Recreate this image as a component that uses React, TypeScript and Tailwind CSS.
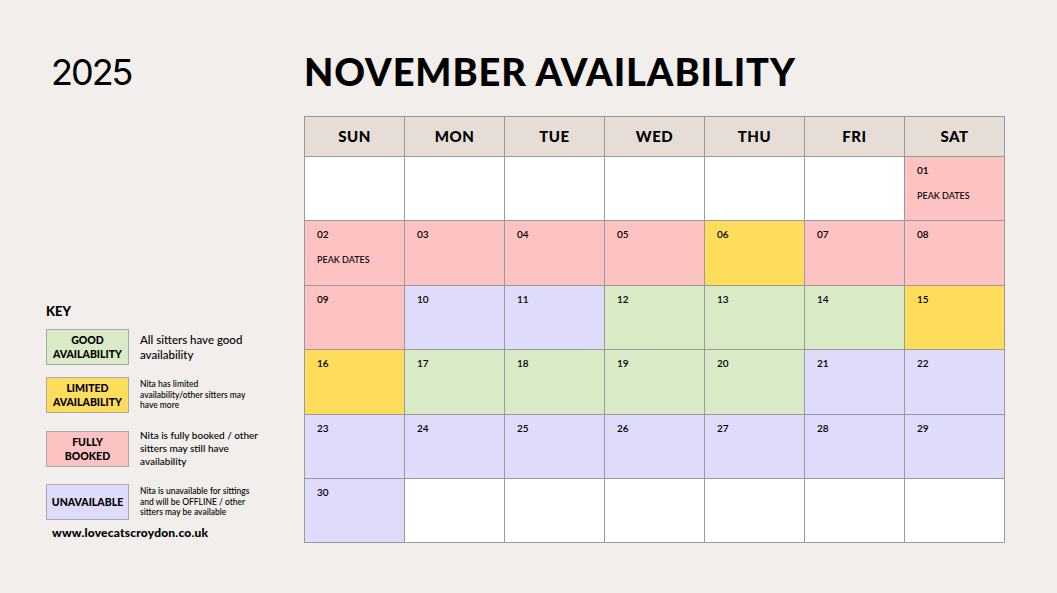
const PINK = 'bg-[#fdc2c2]';
const YELLOW = 'bg-[#fedd5c]';
const GREEN = 'bg-[#d9eac6]';
const LAV = 'bg-[#dedbfb]';
const WHITE = 'bg-white';

type Cell = { day?: string; bg: string; note?: string };

const days = ['SUN', 'MON', 'TUE', 'WED', 'THU', 'FRI', 'SAT'];

const cells: Cell[] = [
  { bg: WHITE },
  { bg: WHITE },
  { bg: WHITE },
  { bg: WHITE },
  { bg: WHITE },
  { bg: WHITE },
  { day: '01', bg: PINK, note: 'PEAK DATES' },
  { day: '02', bg: PINK, note: 'PEAK DATES' },
  { day: '03', bg: PINK },
  { day: '04', bg: PINK },
  { day: '05', bg: PINK },
  { day: '06', bg: YELLOW },
  { day: '07', bg: PINK },
  { day: '08', bg: PINK },
  { day: '09', bg: PINK },
  { day: '10', bg: LAV },
  { day: '11', bg: LAV },
  { day: '12', bg: GREEN },
  { day: '13', bg: GREEN },
  { day: '14', bg: GREEN },
  { day: '15', bg: YELLOW },
  { day: '16', bg: YELLOW },
  { day: '17', bg: GREEN },
  { day: '18', bg: GREEN },
  { day: '19', bg: GREEN },
  { day: '20', bg: GREEN },
  { day: '21', bg: LAV },
  { day: '22', bg: LAV },
  { day: '23', bg: LAV },
  { day: '24', bg: LAV },
  { day: '25', bg: LAV },
  { day: '26', bg: LAV },
  { day: '27', bg: LAV },
  { day: '28', bg: LAV },
  { day: '29', bg: LAV },
  { day: '30', bg: LAV },
  { bg: WHITE },
  { bg: WHITE },
  { bg: WHITE },
  { bg: WHITE },
  { bg: WHITE },
  { bg: WHITE },
];

const keyItems = [
  {
    label: ['GOOD', 'AVAILABILITY'],
    bg: GREEN,
    text: 'All sitters have good availability',
    size: 'w-[128px] text-[11.5px] leading-[15px]',
    gap: '',
  },
  {
    label: ['LIMITED', 'AVAILABILITY'],
    bg: YELLOW,
    text: 'Nita has limited availability/other sitters may have more',
    size: 'w-[118px] text-[8.5px] leading-[10.5px]',
    gap: 'mt-[12px]',
  },
  {
    label: ['FULLY', 'BOOKED'],
    bg: PINK,
    text: 'Nita is fully booked / other sitters may still have availability',
    size: 'w-[128px] text-[10px] leading-[13px]',
    gap: 'mt-[16px]',
  },
  {
    label: ['UNAVAILABLE'],
    bg: LAV,
    text: 'Nita is unavailable for sittings and will be OFFLINE / other sitters may be available',
    size: 'w-[118px] text-[8.5px] leading-[10.5px]',
    gap: 'mt-[16px]',
  },
];

export default function App() {
  return (
    <div className="flex h-[593px] w-[1057px] bg-[#f1eeeb] font-['Lato',sans-serif] text-black">
      <aside className="flex w-[304px] flex-col">
        <h2 className="pl-[51px] pt-[50px] font-['Inter',sans-serif] text-[36px] font-normal leading-[44px] tracking-[-2px]">
          2025
        </h2>

        <div className="mt-[209px] pl-[46px]">
          <h3 className="text-[13px] font-black leading-[16px]">KEY</h3>
          <div className="mt-[10px] flex flex-col">
            {keyItems.map((item, i) => (
              <div key={i} className={`flex items-center gap-[11px] ${item.gap}`}>
                <div
                  className={`flex h-[36px] w-[83px] shrink-0 flex-col items-center justify-center border border-[#a9a9a9] ${item.bg} text-[10.5px] font-black leading-[14px]`}
                >
                  {item.label.map((l) => (
                    <span key={l}>{l}</span>
                  ))}
                </div>
                <p className={`${item.size} font-medium`}>{item.text}</p>
              </div>
            ))}
          </div>
          <p className="mt-[5px] pl-[6px] text-[12px] font-black leading-[16px] tracking-[0.2px]">
            www.lovecatscroydon.co.uk
          </p>
        </div>
      </aside>

      <main className="flex flex-col">
        <h1 className="pt-[49px] font-['Lato',sans-serif] text-[38px] font-black leading-[44px] tracking-[0.9px]">
          NOVEMBER AVAILABILITY
        </h1>

        <div className="mt-[23px] w-[701px] border-l border-t border-[#9a9a9a]">
          <div className="grid grid-cols-7">
            {days.map((d) => (
              <div
                key={d}
                className="flex h-[40px] items-center justify-center border-b border-r border-[#9a9a9a] bg-[#e5ddd6] text-[15px] font-black tracking-[0.5px]"
              >
                {d}
              </div>
            ))}
          </div>
          <div className="grid grid-cols-7">
            {cells.map((c, i) => (
              <div
                key={i}
                className={`flex h-[64.4px] flex-col border-b border-r border-[#9a9a9a] ${c.bg} pl-[12px] pt-[7px] text-[10px] font-semibold leading-[12px]`}
              >
                {c.day && <span>{c.day}</span>}
                {c.note && <span className="mt-[14px] text-[9px] font-medium">{c.note}</span>}
              </div>
            ))}
          </div>
        </div>
      </main>
    </div>
  );
}
